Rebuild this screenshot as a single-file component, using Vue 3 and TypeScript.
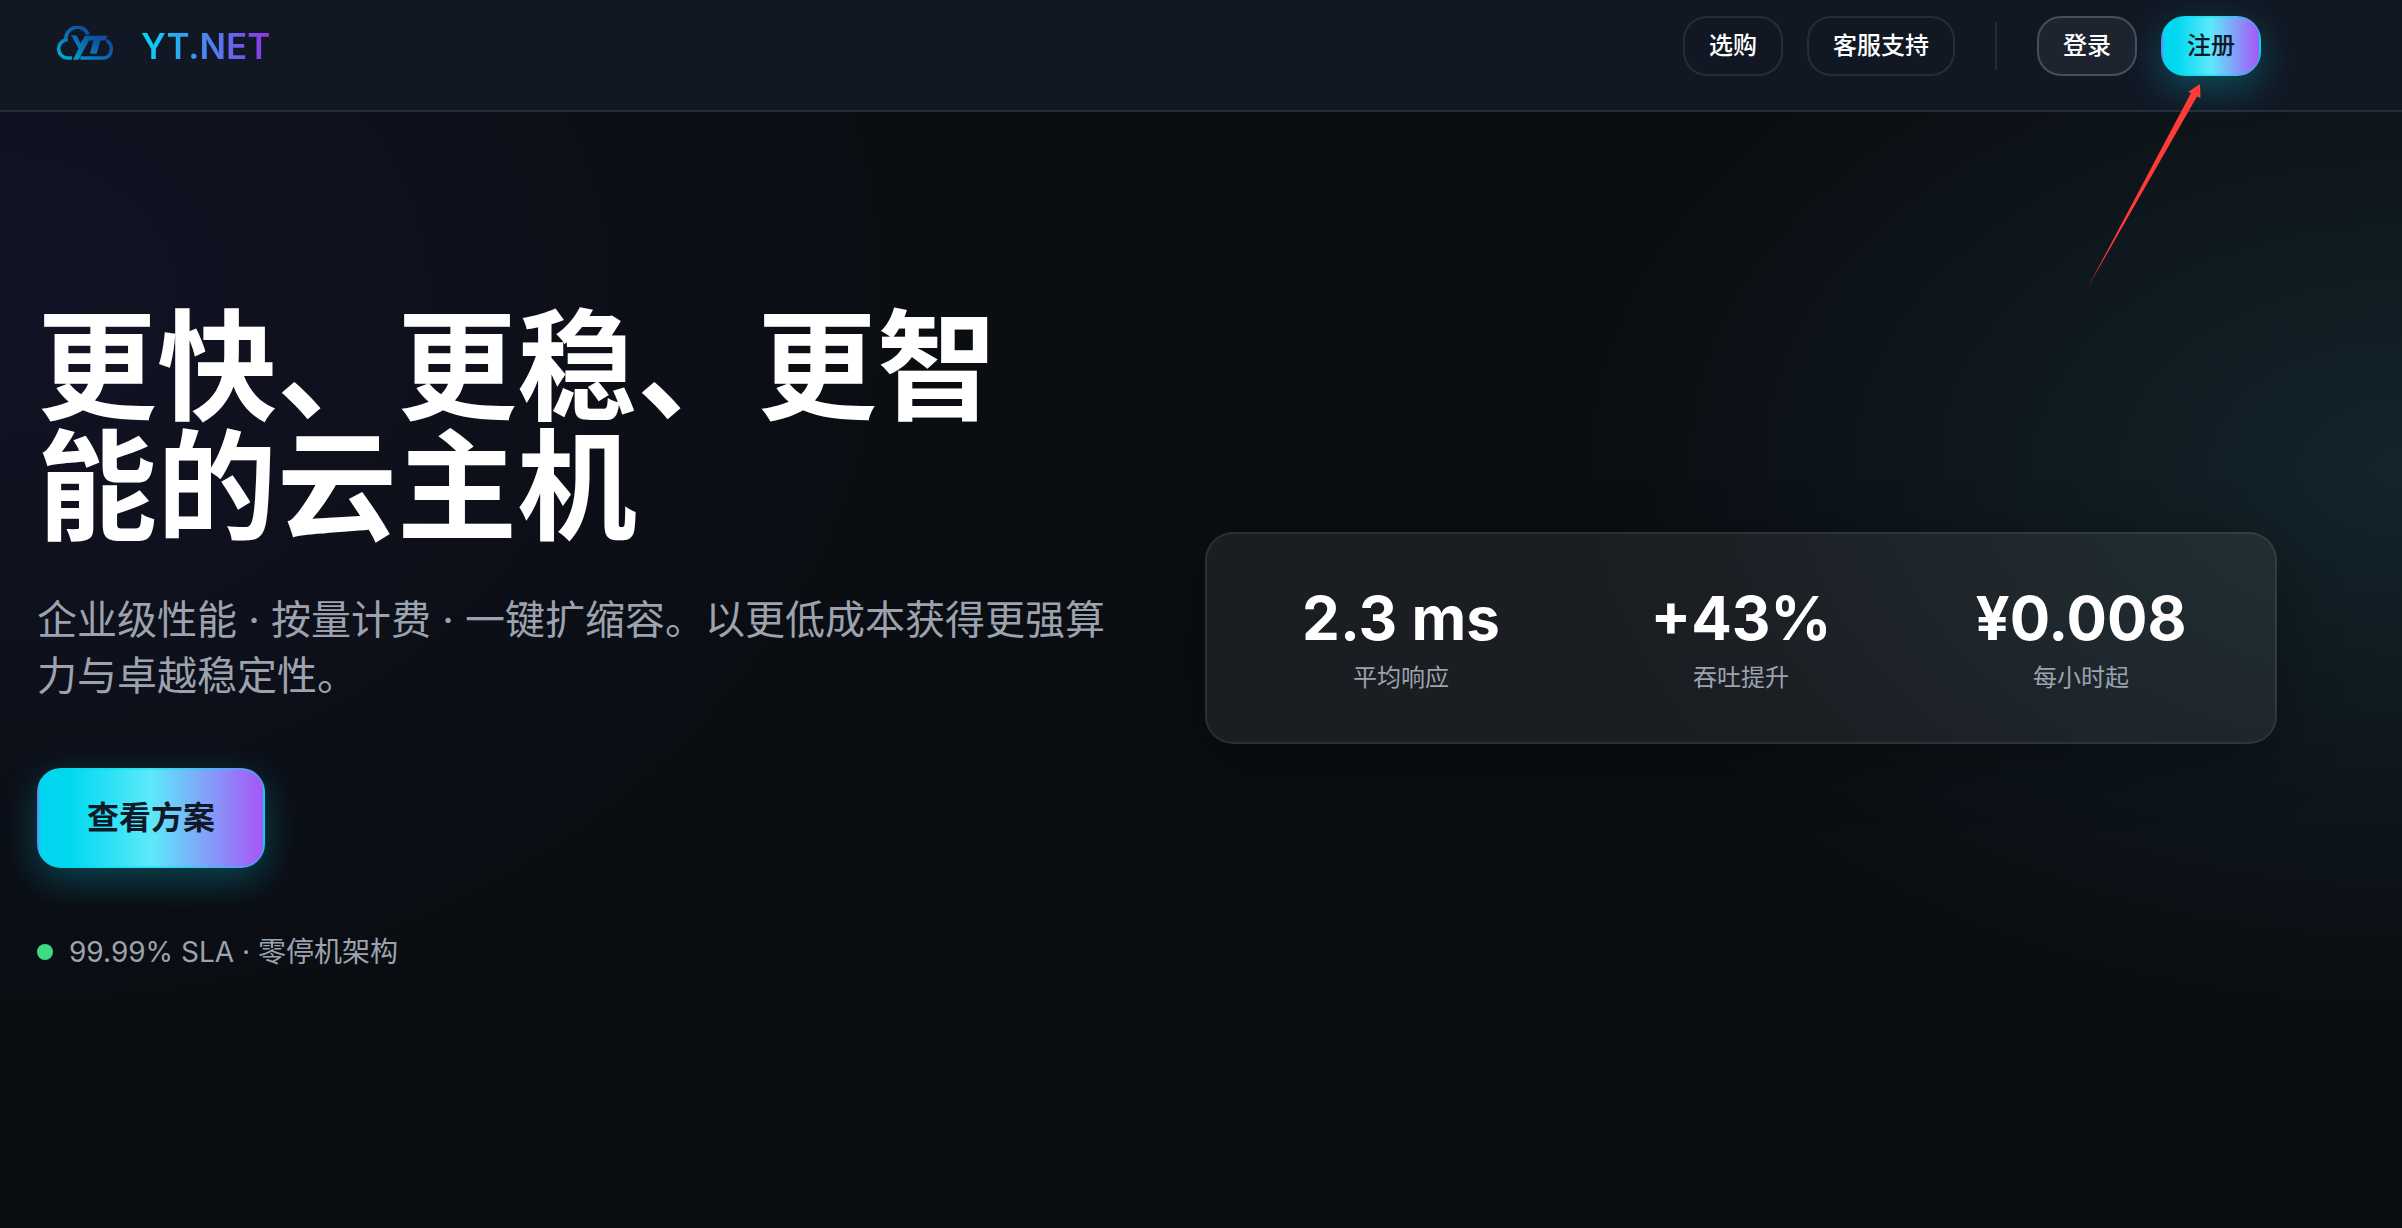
<script setup lang="ts">
interface Stat {
  value: string
  label: string
}

const stats: Stat[] = [
  { value: '2.3 ms', label: '平均响应' },
  { value: '+43%', label: '吞吐提升' },
  { value: '¥0.008', label: '每小时起' },
]
</script>

<template>
  <div class="page">
    <header class="topbar">
      <a class="brand" href="#">
        <svg class="brand-mark" viewBox="0 0 60 40" aria-hidden="true">
          <defs>
            <linearGradient id="mark" gradientUnits="userSpaceOnUse" x1="16" y1="36" x2="38" y2="6">
              <stop offset="0" stop-color="#00a9d4" />
              <stop offset="0.5" stop-color="#0877b8" />
              <stop offset="1" stop-color="#0b509c" />
            </linearGradient>
          </defs>
          <g fill="none" stroke="url(#mark)" stroke-width="3.6">
            <path d="M19 32H14.500A9.200 9.200 0 0 1 13 13.800A11.400 11.400 0 0 1 35 8.500" />
            <path d="M53.500 14.500C57 16.500 58.300 19.500 58.300 23C58.300 28.500 55 32 50 32H27.500" />
          </g>
          <g fill="url(#mark)">
            <path d="M17.500 9.300H21.500Q24 9.300 24.800 11.500L27.500 17.500L32 9.700H54.500L52.800 14.600H36L25.500 33.800H20L25.500 22.500L20.500 13.500Q19.500 10.500 17.500 9.300Z" />
            <path d="M40.500 14H47.500L43.700 27.800H37Z" />
          </g>
        </svg>
        <span class="brand-name">YT.NET</span>
      </a>
      <nav class="actions" aria-label="主导航">
        <a class="btn ghost" href="#">选购</a>
        <a class="btn ghost" href="#">客服支持</a>
        <span class="divider"></span>
        <button class="btn soft" type="button">登录</button>
        <div class="register">
          <button class="btn primary" type="button">注册</button>
          <svg class="pointer" viewBox="0 0 114 204" aria-hidden="true">
            <path d="M112 0L100 8L103 9L0 203L109 12.500L112.500 14Z" fill="#ff3b38" />
          </svg>
        </div>
      </nav>
    </header>

    <main class="hero">
      <section class="intro">
        <h1>更快、更稳、更智能的云主机</h1>
        <p class="lead">企业级性能 · 按量计费 · 一键扩缩容。以更低成本获得更强算力与卓越稳定性。</p>
        <button class="btn primary large" type="button">查看方案</button>
        <p class="sla"><span class="dot"></span>99.99% SLA · 零停机架构</p>
      </section>
      <dl class="stats">
        <div v-for="s in stats" :key="s.label" class="stat">
          <dt>{{ s.label }}</dt>
          <dd>{{ s.value }}</dd>
        </div>
      </dl>
    </main>
  </div>
</template>

<style>
body {
  margin: 0;
  background: #0a0d12;
}
</style>

<style scoped>
.page {
  min-height: 100vh;
  box-sizing: border-box;
  color: #fff;
  font-family: Inter, "Noto Sans CJK SC", sans-serif;
  background:
    radial-gradient(820px 540px at 100% 38%, rgba(80, 190, 210, 0.13), transparent),
    radial-gradient(900px 720px at 0% 24%, rgba(95, 80, 225, 0.09), transparent),
    #0a0d12;
}

.topbar {
  display: flex;
  justify-content: space-between;
  align-items: flex-start;
  height: 110px;
  padding: 0 141px 0 53px;
  background: #111824;
  border-bottom: 2px solid #262d38;
}

.brand {
  display: flex;
  align-items: center;
  gap: 28px;
  padding-top: 16px;
  height: 60px;
  text-decoration: none;
}

.brand-mark {
  width: 60px;
  height: 40px;
}

.brand-name {
  font-size: 35px;
  font-weight: 600;
  line-height: 60px;
  color: transparent;
  background: linear-gradient(90deg, #00d9f5, #9333ea);
  background-clip: text;
}

.actions {
  display: flex;
  align-items: center;
  gap: 24px;
  padding-top: 16px;
}

.btn {
  display: inline-block;
  box-sizing: border-box;
  margin: 0;
  padding: 0 24px;
  border: 2px solid transparent;
  border-radius: 24px;
  font: 500 24px/56px Inter, "Noto Sans CJK SC", sans-serif;
  color: #fff;
  text-decoration: none;
  white-space: nowrap;
}

.ghost {
  border-color: #262d38;
}

.soft {
  background: #1d2430;
  border-color: #484e58;
}

.primary {
  color: #111827;
  background: linear-gradient(90deg, #00d5ee, #00d9f0 14%, #5ceafa 50%, #a855f7);
  border-color: rgba(0, 217, 240, 0.4);
  box-shadow: 0 12px 36px rgba(0, 217, 240, 0.28);
}

.large {
  margin-top: 64px;
  padding: 0 48px;
  font-size: 32px;
  font-weight: 600;
  line-height: 96px;
}

.divider {
  width: 2px;
  height: 48px;
  margin: 0 16px;
  background: #262d38;
}

.register {
  position: relative;
}

.pointer {
  position: absolute;
  top: 68px;
  right: 59px;
  width: 114px;
  height: 204px;
  pointer-events: none;
}

.hero {
  display: grid;
  grid-template-columns: 1fr 1fr;
  gap: 96px;
  align-items: center;
  padding: 192px 125px 64px 37px;
}

.intro {
  display: flex;
  flex-direction: column;
  align-items: flex-start;
}

h1 {
  margin: 0;
  padding-top: 4px;
  font-size: 120px;
  font-weight: 700;
  line-height: 120px;
}

.lead {
  margin: 44px 0 0;
  font-size: 40px;
  line-height: 56px;
  color: #9ca3af;
}

.sla {
  display: flex;
  align-items: center;
  gap: 16px;
  margin: 64px 0 0;
  font-size: 28px;
  line-height: 40px;
  color: #9ca3af;
}

.dot {
  width: 16px;
  height: 16px;
  border-radius: 50%;
  background: #3ddc84;
}

.stats {
  display: grid;
  grid-template-columns: repeat(3, 1fr);
  gap: 48px;
  margin: 0;
  padding: 48px;
  border: 2px solid rgba(255, 255, 255, 0.08);
  border-radius: 28px;
  background: rgba(255, 255, 255, 0.065);
  box-shadow: 0 16px 64px rgba(0, 0, 0, 0.3);
}

.stat {
  display: flex;
  flex-direction: column-reverse;
  gap: 8px;
  text-align: center;
}

.stat dt {
  font-size: 24px;
  line-height: 32px;
  color: #9ca3af;
}

.stat dd {
  margin: 0;
  font-size: 60px;
  font-weight: 700;
  line-height: 72px;
}
</style>
